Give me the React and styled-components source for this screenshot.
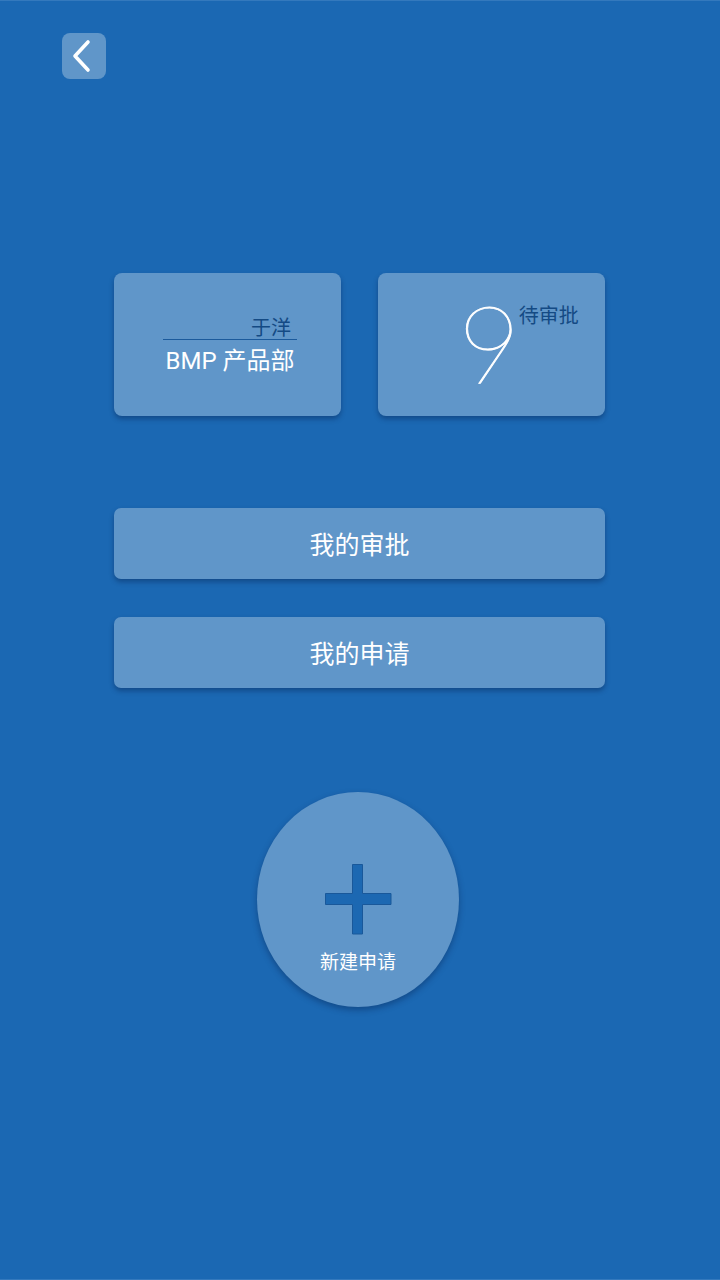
import React from 'react';
import styled, { createGlobalStyle } from 'styled-components';

const GlobalStyle = createGlobalStyle`
  html, body {
    margin: 0;
    padding: 0;
    background: #1b68b3;
  }
  body {
    font-family: 'Noto Sans CJK SC', 'Noto Sans', sans-serif;
  }
`;

const Approval = () => {
  return (
    <Page>
      <GlobalStyle />
      <Header>
        <BackButton aria-label='返回'>
          <svg width='22' height='34' viewBox='0 0 22 34'>
            <path
              d='M18 3 L5 17 L18 31'
              fill='none'
              stroke='#fff'
              strokeWidth='3.6'
              strokeLinecap='round'
              strokeLinejoin='round'
            />
          </svg>
        </BackButton>
      </Header>
      <Main>
        <CardRow>
          <Card>
            <Person>
              <Name>于洋</Name>
              <Dept>BMP 产品部</Dept>
            </Person>
          </Card>
          <Card>
            <Pending>
              <Count>9</Count>
              <PendingLabel>待审批</PendingLabel>
            </Pending>
          </Card>
        </CardRow>
        <Actions>
          <ActionButton>我的审批</ActionButton>
          <ActionButton>我的申请</ActionButton>
        </Actions>
        <NewRequest>
          <svg width='67' height='71' viewBox='0 0 67 71'>
            <path
              d='M27.5 0.5 H37.5 V29.5 H66 V40.5 H37.5 V70 H27.5 V40.5 H0.5 V29.5 H27.5 Z'
              fill='#1c68b2'
              stroke='#19589a'
              strokeWidth='1'
            />
          </svg>
          <NewLabel>新建申请</NewLabel>
        </NewRequest>
      </Main>
    </Page>
  );
};

const Page = styled.div`
  box-sizing: border-box;
  min-height: 1280px;
  padding-top: 32px;
  background: #1b68b3;
  border-top: 1px solid #3479bd;
  border-bottom: 1px solid #3479bd;
`;

const Header = styled.div`
  padding-left: 62px;
`;

const BackButton = styled.button`
  display: flex;
  align-items: center;
  justify-content: center;
  width: 44px;
  height: 46px;
  padding: 0 6px 0 0;
  border: none;
  border-radius: 8px;
  background: #6096c9;
  cursor: pointer;
`;

const Main = styled.div`
  width: 491px;
  margin: 194px 0 0 114px;
`;

const CardRow = styled.div`
  display: flex;
  justify-content: space-between;
`;

const Card = styled.div`
  box-sizing: border-box;
  width: 227px;
  height: 143px;
  border-radius: 8px;
  background: #6096c9;
  box-shadow: 0 3px 5px rgba(0, 20, 60, 0.35);
`;

const Person = styled.div`
  width: 134px;
  margin-left: 49px;
  padding-top: 41px;
`;

const Name = styled.div`
  padding-right: 6px;
  height: 25px;
  line-height: 25px;
  font-size: 20px;
  color: #144a84;
  text-align: right;
  border-bottom: 1px solid #1b5a9c;
`;

const Dept = styled.div`
  margin-top: 6px;
  line-height: 30px;
  font-size: 24px;
  color: #fff;
  text-align: center;
  font-family: Roboto, 'Noto Sans CJK SC', sans-serif;
`;

const Pending = styled.div`
  display: flex;
  align-items: flex-start;
  padding: 14px 0 0 80px;
`;

const Count = styled.div`
  font-family: Lato, Roboto, sans-serif;
  font-weight: 100;
  font-size: 108px;
  line-height: 110px;
  color: #fff;
  -webkit-text-stroke: 0.9px #fff;
`;

const PendingLabel = styled.div`
  margin: 16px 0 0 -2px;
  font-size: 20px;
  line-height: 24px;
  color: #144a84;
`;

const Actions = styled.div`
  display: flex;
  flex-direction: column;
  gap: 38px;
  margin-top: 92px;
`;

const ActionButton = styled.button`
  height: 71px;
  padding-bottom: 3px;
  border: none;
  border-radius: 7px;
  background: #6096c9;
  box-shadow: 0 3px 5px rgba(0, 20, 60, 0.35);
  color: #fff;
  font-family: 'Noto Sans CJK SC', sans-serif;
  font-size: 25px;
  cursor: pointer;
`;

const NewRequest = styled.div`
  box-sizing: border-box;
  display: flex;
  flex-direction: column;
  align-items: center;
  width: 202px;
  height: 215px;
  margin: 104px 0 0 143px;
  padding-top: 72px;
  border-radius: 50%;
  background: #6096c9;
  box-shadow: 0 3px 6px rgba(0, 20, 60, 0.35);
`;

const NewLabel = styled.div`
  margin-top: 13px;
  font-size: 19px;
  line-height: 26px;
  color: #fff;
`;

export default Approval;
